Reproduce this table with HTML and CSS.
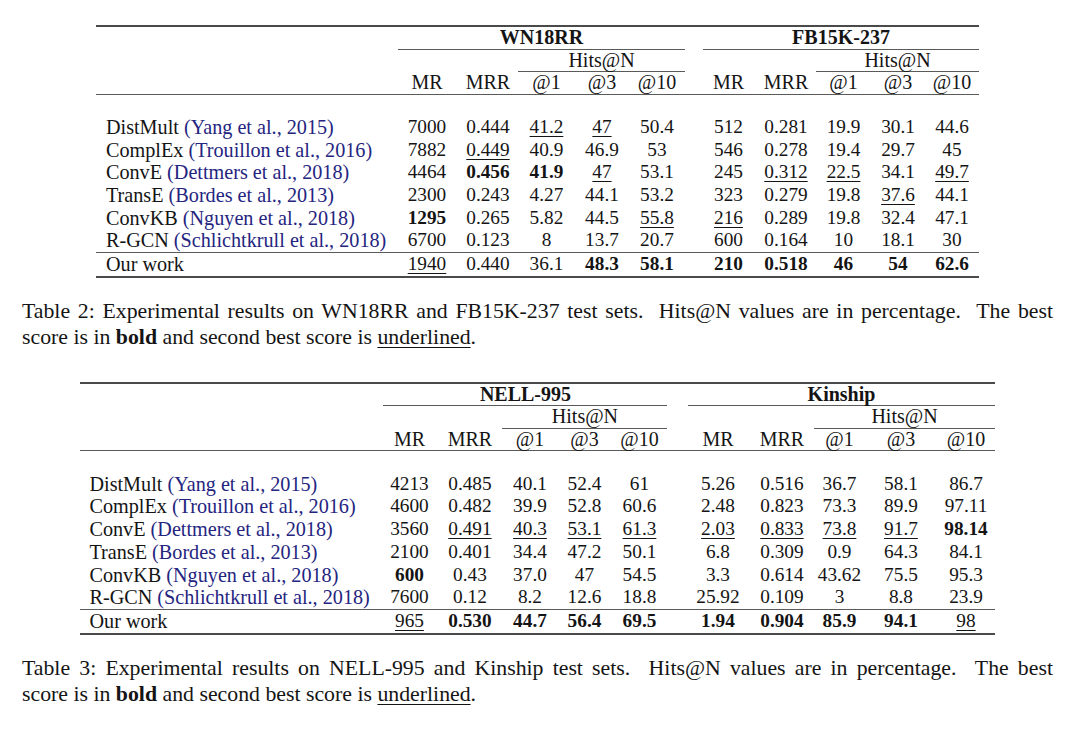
FILE: index.html
```html
<!DOCTYPE html>
<html>
<head>
<meta charset="utf-8">
<title>Experimental results</title>
<link rel="stylesheet" href="styles.css">
</head>
<body>
<div class="page">
  <section class="block first">
    <table class="res t1">
      <colgroup>
        <col class="w0"><col class="w1"><col class="w2"><col class="w3"><col class="w4"><col class="w5">
        <col class="w6"><col class="w7"><col class="w8"><col class="w9"><col class="w10"><col class="w11">
      </colgroup>
      <thead>
        <tr class="h">
          <td></td>
          <td colspan="5" class="grp"><div class="cmid ds">WN18RR</div></td>
          <td></td>
          <td colspan="5" class="grp"><div class="cmid ds">FB15K-237</div></td>
        </tr>
        <tr class="h">
          <td></td><td></td><td></td>
          <td colspan="3" class="grp"><div class="cmid end">Hits@N</div></td>
          <td></td><td></td><td></td>
          <td colspan="3" class="grp"><div class="cmid end">Hits@N</div></td>
        </tr>
        <tr class="h mid">
          <td></td><td>MR</td><td>MRR</td><td>@1</td><td>@3</td><td>@10</td>
          <td></td><td>MR</td><td>MRR</td><td>@1</td><td>@3</td><td>@10</td>
        </tr>
      </thead>
      <tbody>
        <tr class="blank"><td colspan="12"></td></tr>
        <tr><td class="m">DistMult <span class="cite">(Yang et al., 2015)</span></td><td>7000</td><td>0.444</td><td><u>41.2</u></td><td><u>47</u></td><td>50.4</td><td></td><td>512</td><td>0.281</td><td>19.9</td><td>30.1</td><td>44.6</td></tr>
        <tr><td class="m">ComplEx <span class="cite">(Trouillon et al., 2016)</span></td><td>7882</td><td><u>0.449</u></td><td>40.9</td><td>46.9</td><td>53</td><td></td><td>546</td><td>0.278</td><td>19.4</td><td>29.7</td><td>45</td></tr>
        <tr><td class="m">ConvE <span class="cite">(Dettmers et al., 2018)</span></td><td>4464</td><td><b>0.456</b></td><td><b>41.9</b></td><td><u>47</u></td><td>53.1</td><td></td><td>245</td><td><u>0.312</u></td><td><u>22.5</u></td><td>34.1</td><td><u>49.7</u></td></tr>
        <tr><td class="m">TransE <span class="cite">(Bordes et al., 2013)</span></td><td>2300</td><td>0.243</td><td>4.27</td><td>44.1</td><td>53.2</td><td></td><td>323</td><td>0.279</td><td>19.8</td><td><u>37.6</u></td><td>44.1</td></tr>
        <tr><td class="m">ConvKB <span class="cite">(Nguyen et al., 2018)</span></td><td><b>1295</b></td><td>0.265</td><td>5.82</td><td>44.5</td><td><u>55.8</u></td><td></td><td><u>216</u></td><td>0.289</td><td>19.8</td><td>32.4</td><td>47.1</td></tr>
        <tr><td class="m">R-GCN <span class="cite">(Schlichtkrull et al., 2018)</span></td><td>6700</td><td>0.123</td><td>8</td><td>13.7</td><td>20.7</td><td></td><td>600</td><td>0.164</td><td>10</td><td>18.1</td><td>30</td></tr>
        <tr class="ours"><td class="m">Our work</td><td><u>1940</u></td><td>0.440</td><td>36.1</td><td><b>48.3</b></td><td><b>58.1</b></td><td></td><td><b>210</b></td><td><b>0.518</b></td><td><b>46</b></td><td><b>54</b></td><td><b>62.6</b></td></tr>
      </tbody>
    </table>
    <p class="caption"><span class="line full">Table 2: Experimental results on WN18RR and FB15K-237 test sets. &nbsp;Hits@N values are in percentage. &nbsp;The best</span><span class="line">score is in <b>bold</b> and second best score is <u>underlined</u>.</span></p>
  </section>

  <section class="block second">
    <table class="res t2">
      <colgroup>
        <col class="w0"><col class="w1"><col class="w2"><col class="w3"><col class="w4"><col class="w5">
        <col class="w6"><col class="w7"><col class="w8"><col class="w9"><col class="w10"><col class="w11">
      </colgroup>
      <thead>
        <tr class="h">
          <td></td>
          <td colspan="5" class="grp"><div class="cmid ds">NELL-995</div></td>
          <td></td>
          <td colspan="5" class="grp"><div class="cmid ds">Kinship</div></td>
        </tr>
        <tr class="h">
          <td></td><td></td><td></td>
          <td colspan="3" class="grp"><div class="cmid end">Hits@N</div></td>
          <td></td><td></td><td></td>
          <td colspan="3" class="grp"><div class="cmid end">Hits@N</div></td>
        </tr>
        <tr class="h mid">
          <td></td><td>MR</td><td>MRR</td><td>@1</td><td>@3</td><td>@10</td>
          <td></td><td>MR</td><td>MRR</td><td>@1</td><td>@3</td><td>@10</td>
        </tr>
      </thead>
      <tbody>
        <tr class="blank"><td colspan="12"></td></tr>
        <tr><td class="m">DistMult <span class="cite">(Yang et al., 2015)</span></td><td>4213</td><td>0.485</td><td>40.1</td><td>52.4</td><td>61</td><td></td><td>5.26</td><td>0.516</td><td>36.7</td><td>58.1</td><td>86.7</td></tr>
        <tr><td class="m">ComplEx <span class="cite">(Trouillon et al., 2016)</span></td><td>4600</td><td>0.482</td><td>39.9</td><td>52.8</td><td>60.6</td><td></td><td>2.48</td><td>0.823</td><td>73.3</td><td>89.9</td><td>97.11</td></tr>
        <tr><td class="m">ConvE <span class="cite">(Dettmers et al., 2018)</span></td><td>3560</td><td><u>0.491</u></td><td><u>40.3</u></td><td><u>53.1</u></td><td><u>61.3</u></td><td></td><td><u>2.03</u></td><td><u>0.833</u></td><td><u>73.8</u></td><td><u>91.7</u></td><td><b>98.14</b></td></tr>
        <tr><td class="m">TransE <span class="cite">(Bordes et al., 2013)</span></td><td>2100</td><td>0.401</td><td>34.4</td><td>47.2</td><td>50.1</td><td></td><td>6.8</td><td>0.309</td><td>0.9</td><td>64.3</td><td>84.1</td></tr>
        <tr><td class="m">ConvKB <span class="cite">(Nguyen et al., 2018)</span></td><td><b>600</b></td><td>0.43</td><td>37.0</td><td>47</td><td>54.5</td><td></td><td>3.3</td><td>0.614</td><td>43.62</td><td>75.5</td><td>95.3</td></tr>
        <tr><td class="m">R-GCN <span class="cite">(Schlichtkrull et al., 2018)</span></td><td>7600</td><td>0.12</td><td>8.2</td><td>12.6</td><td>18.8</td><td></td><td>25.92</td><td>0.109</td><td>3</td><td>8.8</td><td>23.9</td></tr>
        <tr class="ours"><td class="m">Our work</td><td><u>965</u></td><td><b>0.530</b></td><td><b>44.7</b></td><td><b>56.4</b></td><td><b>69.5</b></td><td></td><td><b>1.94</b></td><td><b>0.904</b></td><td><b>85.9</b></td><td><b>94.1</b></td><td><u>98</u></td></tr>
      </tbody>
    </table>
    <p class="caption"><span class="line full">Table 3: Experimental results on NELL-995 and Kinship test sets. &nbsp;Hits@N values are in percentage. &nbsp;The best</span><span class="line">score is in <b>bold</b> and second best score is <u>underlined</u>.</span></p>
  </section>
</div>
</body>
</html>
```

FILE: styles.css
```css
html, body {
  margin: 0;
  padding: 0;
  background: #ffffff;
}

body {
  font-family: "Liberation Serif", "Times New Roman", serif;
  color: #141414;
  width: 1080px;
  height: 732px;
  overflow: hidden;
}

.page {
  width: 1031px;
  margin-left: 22px;
}

.block.first {
  padding-top: 25px;
}

.block.second {
  margin-top: 31px;
}

.res {
  margin: 0 auto;
  border-collapse: separate;
  border-spacing: 0;
  table-layout: fixed;
  font-size: 19.3px;
  border-top: 2px solid #4a4a4a;
  border-bottom: 2px solid #4a4a4a;
}

.t1 { width: 883px; }
.t2 { width: 914px; }

.t1 .w0 { width: 300px; }
.t1 .w1 { width: 62px; }
.t1 .w2 { width: 60px; }
.t1 .w3 { width: 57px; }
.t1 .w4 { width: 54px; }
.t1 .w5 { width: 56px; }
.t1 .w6 { width: 16px; }
.t1 .w7 { width: 55px; }
.t1 .w8 { width: 60px; }
.t1 .w9 { width: 55px; }
.t1 .w10 { width: 54px; }
.t1 .w11 { width: 54px; }

.t2 .w0 { width: 301px; }
.t2 .w1 { width: 56px; }
.t2 .w2 { width: 65px; }
.t2 .w3 { width: 55px; }
.t2 .w4 { width: 54px; }
.t2 .w5 { width: 56px; }
.t2 .w6 { width: 19px; }
.t2 .w7 { width: 63px; }
.t2 .w8 { width: 65px; }
.t2 .w9 { width: 50px; }
.t2 .w10 { width: 73px; }
.t2 .w11 { width: 57px; }

.res td {
  padding: 0;
  text-align: center;
  white-space: nowrap;
  line-height: 22.7px;
  height: 22.7px;
  vertical-align: top;
}

.res tr.h td {
  font-size: 20px;
  line-height: 21.5px;
  height: 21.5px;
}

.res tr.h td.grp {
  height: auto;
}

.cmid {
  line-height: 21.5px;
  border-bottom: 1px solid #5a5a5a;
}

.cmid.ds {
  font-weight: bold;
  margin: 0 0 0 2px;
}

.res tr.mid td {
  border-bottom: 1px solid #5a5a5a;
}

.res tr.blank td {
  height: 21.4px;
  line-height: 21.4px;
}

.res tr.ours td {
  border-top: 1px solid #5a5a5a;
}

.res td.m {
  text-align: left;
  padding-left: 9px;
  font-size: 20.2px;
}

.t1 td.m {
  padding-left: 10px;
}

.cite {
  color: #25257f;
}

.res u,
.caption u {
  text-decoration: underline;
  text-decoration-thickness: 1px;
  text-underline-offset: 3px;
}

.caption {
  margin: 20px 0 0 0;
  font-size: 21.8px;
  line-height: 26.5px;
}

.caption .line {
  display: block;
  white-space: nowrap;
}

.caption .full {
  text-align: justify;
  text-align-last: justify;
}
```
